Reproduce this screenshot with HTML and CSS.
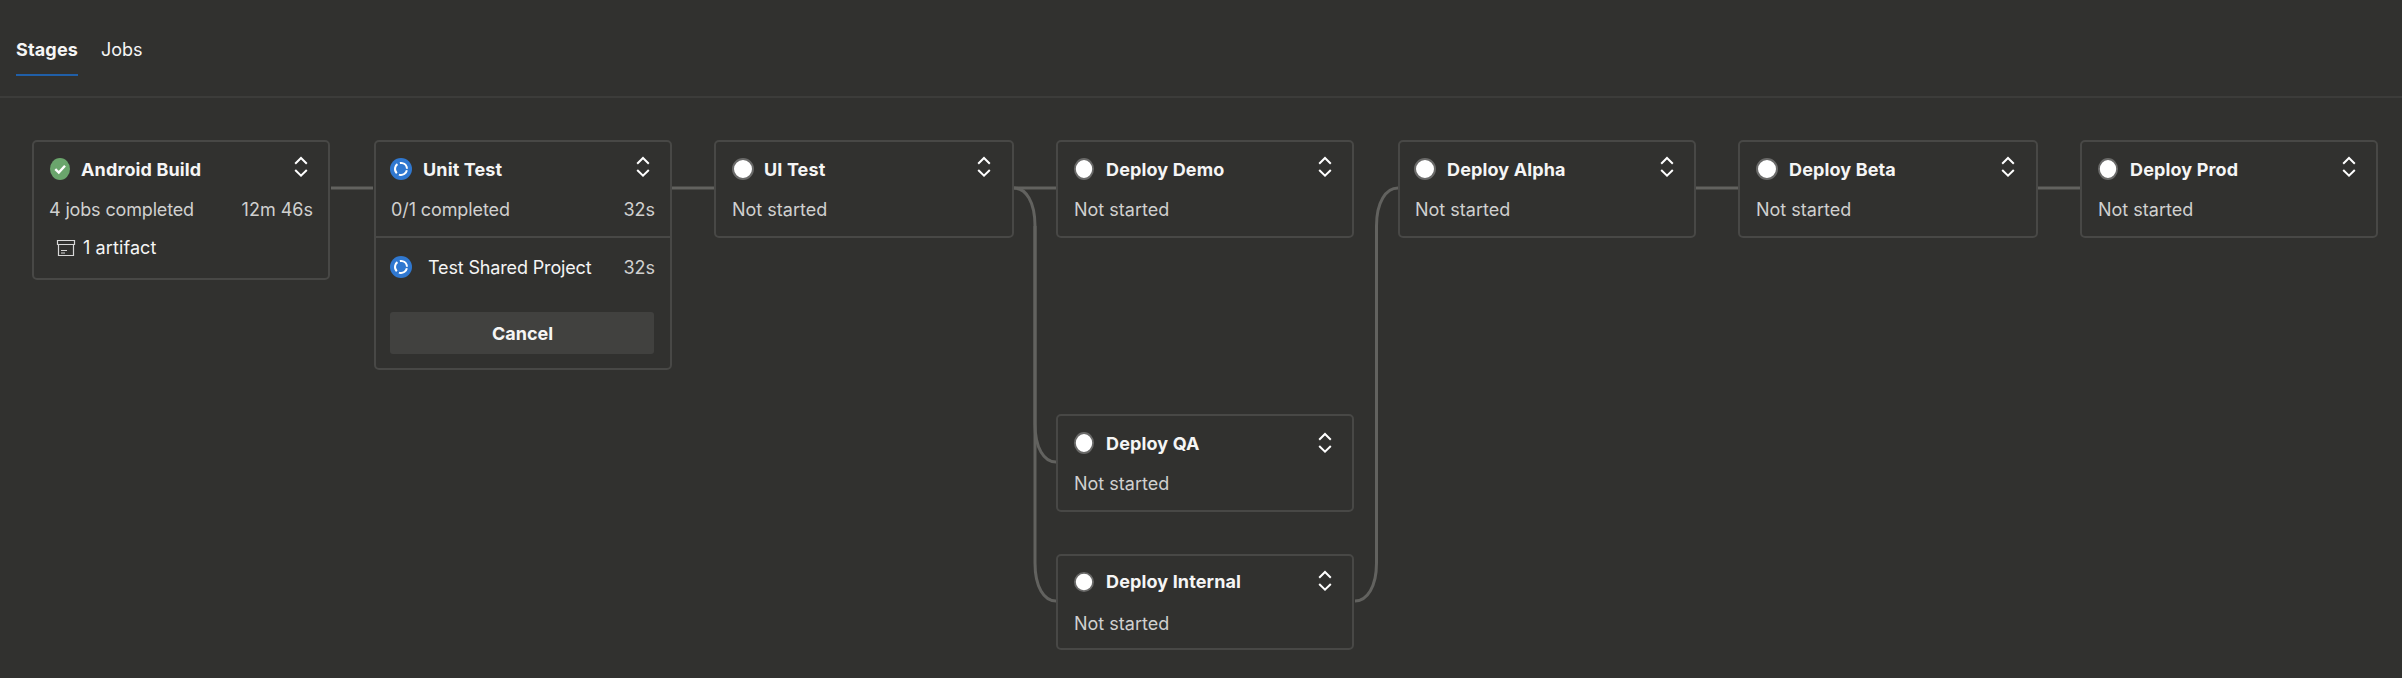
FILE: index.html
```
<!DOCTYPE html>
<html lang="en">
<head>
<meta charset="utf-8">
<title>Pipeline stages</title>
<link rel="stylesheet" href="styles.css">
</head>
<body>
<svg class="defs" width="0" height="0" aria-hidden="true">
  <symbol id="chevrons" viewBox="0 0 14 22"><path d="M1.200 7.700 7 2l5.800 5.700M1.200 14l5.800 5.700 5.800-5.700" fill="none" stroke="#fff" stroke-width="2"/></symbol>
  <symbol id="success" viewBox="0 0 20 22" preserveAspectRatio="none"><ellipse cx="10" cy="11" rx="10" ry="11" fill="#6aa56c"/><path d="M5.300 11.200 8.800 14.600 15 7.800" fill="none" stroke="#fff" stroke-width="2.400"/></symbol>
  <symbol id="running" viewBox="0 0 22 22"><circle cx="11" cy="11" r="11" fill="#3078d0"/><circle cx="11" cy="11" r="6" fill="none" stroke="#fff" stroke-width="2" stroke-dasharray="10.070 2.500" transform="rotate(12 11 11)"/></symbol>
  <symbol id="pending" viewBox="0 0 22 22" preserveAspectRatio="none"><circle cx="11" cy="11" r="10" fill="#fff" stroke="#6a6a69" stroke-width="2"/></symbol>
  <symbol id="artifact" viewBox="0 0 20 18"><path d="M1.500 1.500h17v4h-17zM2.500 5.500v11h15v-11M5 11.500h6M5 14h4" fill="none" stroke="#d8d8d8" stroke-width="1.200"/></symbol>
</svg>
<nav class="tabs">
  <a class="tab active">Stages</a>
  <a class="tab">Jobs</a>
</nav>
<main class="graph">
  <svg class="edges" width="2402" height="678" viewBox="0 0 2402 678">
    <path d="M331 188H373M672 188H714M1014 188H1056M1696 188H1738M2038 188H2080"/>
    <path d="M1014 188C1026 188 1035 202 1035 226V424C1035 448 1044 462 1056 462"/>
    <path d="M1035 226V563C1035 587 1044 601 1056 601"/>
    <path d="M1355 601C1367 601 1376.500 587 1376.500 563V226C1376.500 202 1386 188 1398 188"/>
  </svg>

  <section class="card build">
    <div class="head"><svg class="status slim"><use href="#success"/></svg><h2>Android Build</h2><svg class="toggle"><use href="#chevrons"/></svg></div>
    <div class="info"><span class="count">4 jobs completed</span><span>12m 46s</span></div>
    <div class="artifact"><svg><use href="#artifact"/></svg><span>1 artifact</span></div>
  </section>

  <section class="card unit">
    <div class="head"><svg class="status"><use href="#running"/></svg><h2>Unit Test</h2><svg class="toggle"><use href="#chevrons"/></svg></div>
    <div class="info"><span class="count">0/1 completed</span><span>32s</span></div>
    <div class="jobs">
      <div class="job"><svg class="status"><use href="#running"/></svg><span class="job-name">Test Shared Project</span><span class="time">32s</span></div>
      <button class="cancel">Cancel</button>
    </div>
  </section>

  <section class="card ui">
    <div class="head"><svg class="status"><use href="#pending"/></svg><h2>UI Test</h2><svg class="toggle"><use href="#chevrons"/></svg></div>
    <div class="info"><span>Not started</span></div>
  </section>

  <section class="card demo">
    <div class="head"><svg class="status slim"><use href="#pending"/></svg><h2>Deploy Demo</h2><svg class="toggle"><use href="#chevrons"/></svg></div>
    <div class="info"><span>Not started</span></div>
  </section>

  <section class="card qa">
    <div class="head"><svg class="status slim"><use href="#pending"/></svg><h2>Deploy QA</h2><svg class="toggle"><use href="#chevrons"/></svg></div>
    <div class="info"><span>Not started</span></div>
  </section>

  <section class="card internal">
    <div class="head"><svg class="status slim"><use href="#pending"/></svg><h2>Deploy Internal</h2><svg class="toggle"><use href="#chevrons"/></svg></div>
    <div class="info"><span>Not started</span></div>
  </section>

  <section class="card alpha">
    <div class="head"><svg class="status"><use href="#pending"/></svg><h2>Deploy Alpha</h2><svg class="toggle"><use href="#chevrons"/></svg></div>
    <div class="info"><span>Not started</span></div>
  </section>

  <section class="card beta">
    <div class="head"><svg class="status"><use href="#pending"/></svg><h2>Deploy Beta</h2><svg class="toggle"><use href="#chevrons"/></svg></div>
    <div class="info"><span>Not started</span></div>
  </section>

  <section class="card prod">
    <div class="head"><svg class="status slim"><use href="#pending"/></svg><h2>Deploy Prod</h2><svg class="toggle"><use href="#chevrons"/></svg></div>
    <div class="info"><span>Not started</span></div>
  </section>
</main>
</body>
</html>
```
FILE: styles.css
```
* { box-sizing: border-box; }
body {
  margin: 0;
  height: 678px;
  overflow: hidden;
  position: relative;
  background: #31312f;
  color: #f5f5f5;
  font: 18px/24px Inter, "Liberation Sans", sans-serif;
}
.defs { position: absolute; }
.tabs {
  display: flex;
  gap: 23px;
  height: 98px;
  padding: 38px 16px 0;
  border-bottom: 2px solid #3c3c3a;
}
.tab { height: 38px; letter-spacing: 0; }
.active { width: 62px; font-weight: 700; letter-spacing: 0.15px; border-bottom: 2px solid #205fa8; }

/* Pipeline graph: stage nodes sit at fixed places on the canvas. */
.edges { position: absolute; left: 0; top: 0; fill: none; stroke: #62625f; stroke-width: 3; }
.card {
  position: absolute;
  top: 140px;
  width: 298px;
  height: 98px;
  padding: 16px 15px 0 16px;
  border: 2px solid #484846;
  border-radius: 5px;
  background: #31312f;
}
.build { left: 32px; height: 140px; }
.unit { left: 374px; height: 230px; padding-left: 14px; }
.ui { left: 714px; width: 300px; }
.demo { left: 1056px; }
.qa { left: 1056px; top: 414px; }
.internal { left: 1056px; top: 554px; height: 96px; }
.alpha { left: 1398px; padding-left: 14px; }
.beta { left: 1738px; width: 300px; }
.prod { left: 2080px; }

.head { display: flex; align-items: center; height: 22px; }
.status { width: 22px; height: 22px; flex: none; }
.slim { width: 20px; }
h2 { margin: 2px 0 0 12px; font-size: 18px; font-weight: 700; line-height: 24px; letter-spacing: 0.13px; white-space: nowrap; }
.unit h2, .ui h2, .alpha h2, .beta h2 { margin-left: 11px; }
.build h2 { margin-left: 11px; }
.ui h2 { margin-left: 10px; }
.toggle { width: 14px; height: 22px; margin: -4px 5px 0 auto; }
.ui .toggle, .beta .toggle { margin-right: 6px; }
.qa .toggle { margin-top: 0; }
.internal h2 { margin-top: -2px; }
.internal .status { height: 20px; margin-top: -2px; }
.info { display: flex; justify-content: space-between; margin-top: 18px; color: #d0d0cf; white-space: nowrap; }
.count { letter-spacing: -0.15px; }
.build .count { margin-left: -1px; }
.unit .count { letter-spacing: -0.1px; margin-left: 1px; }
.alpha .info { padding-left: 1px; }
.artifact { display: flex; align-items: center; gap: 7px; margin-top: 14px; padding-left: 6px; letter-spacing: 0.1px; }
.artifact svg { width: 20px; height: 18px; }
.jobs { margin: 14px -15px 0 -14px; padding: 18px 15px 0 14px; border-top: 2px solid #484846; }
.job { display: flex; align-items: center; height: 22px; white-space: nowrap; }
.job-name { margin: 2px 0 0 16px; letter-spacing: -0.15px; }
.time { margin: 2px 0 0 auto; color: #d0d0cf; }
.cancel {
  display: block;
  width: 264px;
  height: 42px;
  margin-top: 34px;
  padding: 1px 0 0 1px;
  border: 0;
  border-radius: 3px;
  background: #41413f;
  color: #f5f5f5;
  font: 700 18px/41px Inter, "Liberation Sans", sans-serif;
  letter-spacing: 0;
}
```
